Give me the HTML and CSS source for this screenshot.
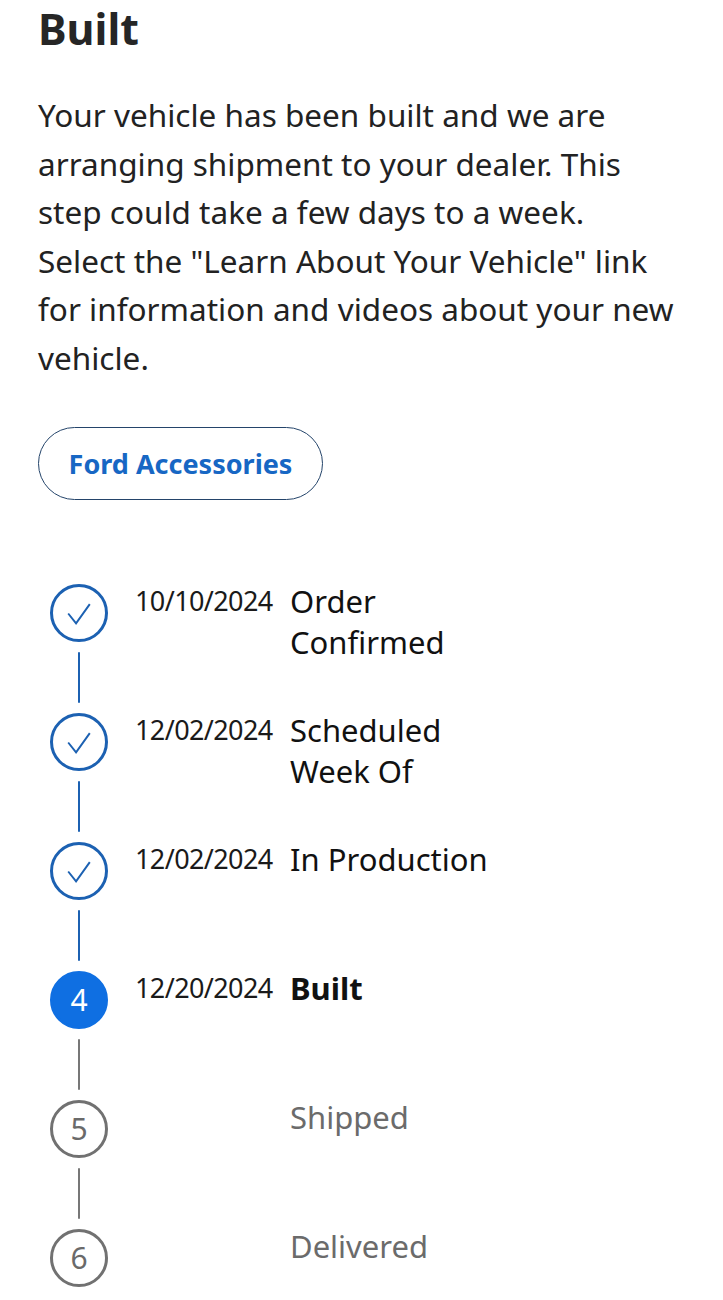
FILE: index.html
```html
<!DOCTYPE html>
<html lang="en">
<head>
    <meta charset="UTF-8">
    <meta name="viewport" content="width=device-width, initial-scale=1.0">
    <title>Order Status - Built</title>
    <link rel="stylesheet" href="styles.css">
</head>
<body>
    <main class="status">
        <h1>Built</h1>
        <p class="status-text">Your vehicle has been built and we are arranging shipment to your dealer. This step could take a few days to a week. Select the "Learn About Your Vehicle" link for information and videos about your new vehicle.</p>

        <a class="pill-btn" href="#">Ford Accessories</a>

        <ol class="tracker">
            <li class="step done">
                <div class="marker">
                    <span class="dot"><svg viewBox="2.5 2.5 53 53"><path d="M18 29.5 L26 39.5 L40 20"/></svg></span>
                    <span class="line"></span>
                </div>
                <span class="date">10/10/2024</span>
                <span class="label">Order Confirmed</span>
            </li>
            <li class="step done">
                <div class="marker">
                    <span class="dot"><svg viewBox="2.5 2.5 53 53"><path d="M18 29.5 L26 39.5 L40 20"/></svg></span>
                    <span class="line"></span>
                </div>
                <span class="date">12/02/2024</span>
                <span class="label">Scheduled Week Of</span>
            </li>
            <li class="step done">
                <div class="marker">
                    <span class="dot"><svg viewBox="2.5 2.5 53 53"><path d="M18 29.5 L26 39.5 L40 20"/></svg></span>
                    <span class="line"></span>
                </div>
                <span class="date">12/02/2024</span>
                <span class="label">In Production</span>
            </li>
            <li class="step current">
                <div class="marker">
                    <span class="dot">4</span>
                    <span class="line"></span>
                </div>
                <span class="date">12/20/2024</span>
                <span class="label">Built</span>
            </li>
            <li class="step todo">
                <div class="marker">
                    <span class="dot">5</span>
                    <span class="line"></span>
                </div>
                <span class="date"></span>
                <span class="label">Shipped</span>
            </li>
            <li class="step todo">
                <div class="marker">
                    <span class="dot">6</span>
                </div>
                <span class="date"></span>
                <span class="label">Delivered</span>
            </li>
        </ol>
    </main>
</body>
</html>
```

FILE: styles.css
```css
body {
    margin: 0;
    background: #fff;
    font-family: "Noto Sans", "Open Sans", sans-serif;
    color: #1c1c1c;
}

.status {
    padding: 0 38px;
}

h1 {
    margin: 0;
    font-size: 43px;
    line-height: 58px;
    font-weight: 700;
    color: #262626;
}

.status-text {
    max-width: 640px;
    margin: 33px 0 0;
    font-size: 31.5px;
    line-height: 48.6px;
    color: #222;
}

.pill-btn {
    display: inline-flex;
    align-items: center;
    justify-content: center;
    box-sizing: border-box;
    width: 285px;
    height: 73px;
    margin-top: 44px;
    border: 1.5px solid #24446a;
    border-radius: 40px;
    color: #1767c4;
    font-size: 27px;
    font-weight: 700;
    text-decoration: none;
}

.tracker {
    list-style: none;
    margin: 84px 0 0;
    padding: 0 0 0 12px;
}

.step {
    display: grid;
    grid-template-columns: 58px 136px 210px;
    column-gap: 28px;
    align-items: start;
}

.step .date {
    margin-left: -1px;
    padding-top: 0;
    font-size: 27px;
    line-height: 34px;
    letter-spacing: -0.6px;
    color: #1a1a1a;
}

.step .label {
    margin-left: -10px;
    margin-top: -3px;
    font-size: 31px;
    line-height: 41px;
    color: #111;
}

.marker {
    display: flex;
    flex-direction: column;
    align-items: center;
}

.dot {
    display: flex;
    align-items: center;
    justify-content: center;
    box-sizing: border-box;
    width: 58px;
    height: 58px;
    border: 3px solid #1c61b2;
    border-radius: 50%;
    font-size: 30px;
}

.dot svg {
    width: 52px;
    height: 52px;
    fill: none;
    stroke: #1c61b2;
    stroke-width: 2;
}

.line {
    width: 2.5px;
    height: 51px;
    margin: 10px 0;
    border-radius: 2px;
    background: #1c61b2;
}

.current .dot {
    background: #0f6fe2;
    border-color: #0f6fe2;
    color: #fff;
}

.current .label {
    font-weight: 700;
}

.current .line,
.todo .line {
    background: #777;
}

.todo .dot {
    border-color: #717171;
    color: #6a6a6a;
}

.todo .label {
    color: #6b6b6b;
}
```
